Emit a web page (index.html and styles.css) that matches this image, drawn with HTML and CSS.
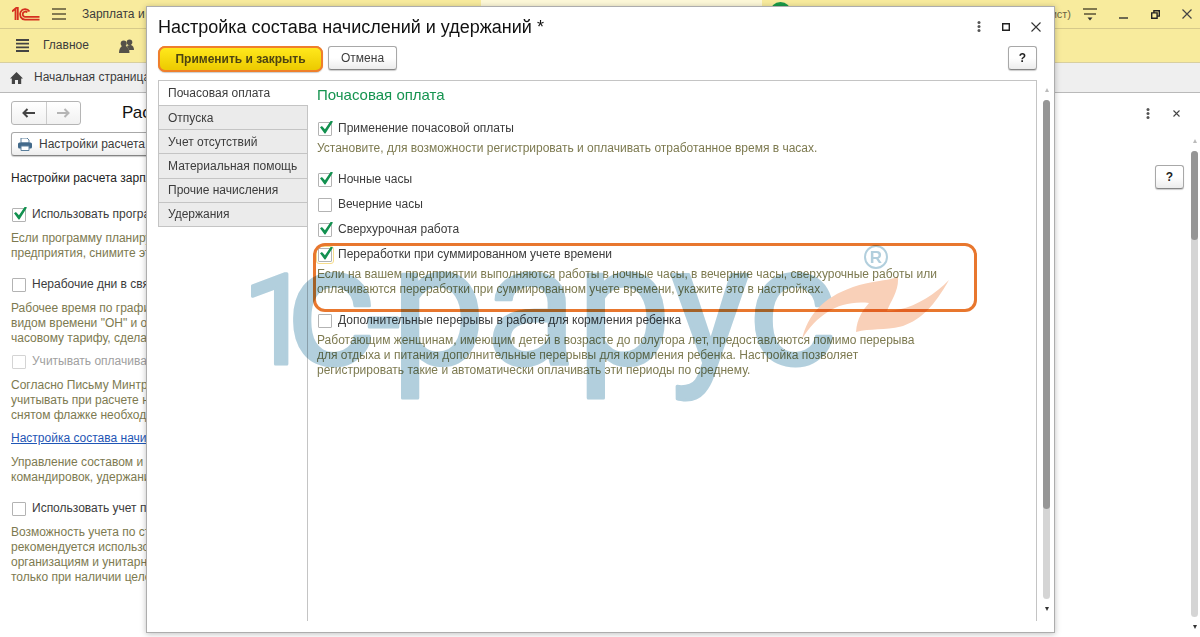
FILE: index.html
```html
<!DOCTYPE html>
<html lang="ru">
<head>
    <meta charset="UTF-8">
    <meta name="viewport" content="width=device-width, initial-scale=1.0">
    <title>Настройка состава начислений и удержаний</title>
    <link rel="stylesheet" href="styles.css">
</head>
<body>
    <div class="app">
        <header class="titlebar">
            <svg class="logo" width="28" height="14" viewBox="0 0 28 14" fill="none" stroke="#d5301f" stroke-width="1.8">
                <path d="M0 4.5 3.5 1.5V13M5.8 13V.8H3.8"/>
                <path d="M17.5 4.5A5.2 5.2 0 1 0 13 12.6H27.5"/>
                <path d="M15.3 5.3A2.7 2.7 0 1 0 13 9.9H27.5"/>
            </svg>
            <button class="icon-btn" aria-label="Меню">
                <svg width="14" height="12" viewBox="0 0 14 12" stroke="#5e5738" stroke-width="1.4"><path d="M0 1H14M0 6H14M0 11H14"/></svg>
            </button>
            <span class="app-name">Зарплата и управление</span>
            <div class="search-box"></div>
            <div class="green-dot"></div>
            <div class="window-tools">
                <span class="user-name">(Расчетчик, специалист)</span>
                <button class="icon-btn" aria-label="Сервис">
                    <svg width="14" height="13" viewBox="0 0 14 13" stroke="#5a5335" stroke-width="1.4"><path d="M0 1H14M1 6H13"/><path d="M4.5 9.5H9.5L7 12.5Z" fill="#333" stroke="none"/></svg>
                </button>
                <button class="icon-btn" aria-label="Свернуть">
                    <svg width="10" height="10" viewBox="0 0 10 10" stroke="#333" stroke-width="1.4"><path d="M0 9H9"/></svg>
                </button>
                <button class="icon-btn" aria-label="Восстановить">
                    <svg width="9" height="9" viewBox="0 0 9 9" fill="none" stroke="#222" stroke-width="1.4"><path d="M.7 2.9H6.1V8.3H.7ZM2.9 2.5V.7H8.3V6.1H6.5"/></svg>
                </button>
                <button class="icon-btn" aria-label="Закрыть">
                    <svg width="10" height="10" viewBox="0 0 10 10" stroke="#444" stroke-width="1.2"><path d="M.5.5 9.5 9.5M9.5.5.5 9.5"/></svg>
                </button>
            </div>
        </header>

        <nav class="sections">
            <svg width="13" height="13" viewBox="0 0 13 13" stroke="#444" stroke-width="1.8"><path d="M0 1H13M0 4.7H13M0 8.4H13M0 12H13"/></svg>
            <a href="#">Главное</a>
            <svg class="people" width="15" height="14" viewBox="0 0 15 14" fill="#555149">
                <circle cx="10.5" cy="3.2" r="2.8"/>
                <path d="M8 7Q10 5.600 12 6Q15 7 15 11H10Z"/>
                <circle cx="4.7" cy="4.6" r="3"/>
                <path d="M0 14Q0 9 3 7H7Q10.5 9 10.5 14Z"/>
            </svg>
        </nav>

        <div class="page-tabs">
            <svg width="13" height="12" viewBox="0 0 13 12" fill="#444"><path d="M6.5 0 13 6.4H11.2V12H8V8H5V12H1.8V6.4H0Z"/></svg>
            <a href="#">Начальная страница</a>
        </div>

        <main class="page">
            <div class="page-head">
                <div class="history">
                    <button aria-label="Назад"><svg width="13" height="10" viewBox="0 0 13 10" fill="none" stroke="#444" stroke-width="2"><path d="M13 5H2M5.5 1 1.5 5 5.5 9"/></svg></button>
                    <button aria-label="Вперед"><svg width="13" height="10" viewBox="0 0 13 10" fill="none" stroke="#b5b5b5" stroke-width="2"><path d="M0 5H11M7.5 1 11.5 5 7.5 9"/></svg></button>
                </div>
                <h1>Расчет зарплаты</h1>
                <div class="page-tools">
                    <button class="icon-btn" aria-label="Еще"><svg width="4" height="11" viewBox="0 0 4 11" fill="#555"><circle cx="2" cy="1.6" r="1.5"/><circle cx="2" cy="5.5" r="1.5"/><circle cx="2" cy="9.4" r="1.5"/></svg></button>
                    <button class="icon-btn" aria-label="Закрыть страницу"><svg width="7" height="7" viewBox="0 0 7 7" stroke="#444" stroke-width="1.1"><path d="M.5.5 6.5 6.5M6.5.5.5 6.5"/></svg></button>
                </div>
            </div>
            <button class="btn print-btn">
                <svg width="14" height="13" viewBox="0 0 14 13">
                    <path d="M3 0H9L11 2V5H3Z" fill="#fff" stroke="#5b7f9c"/>
                    <rect y="4.5" width="14" height="6" rx="1.5" fill="#42698a"/>
                    <path d="M3 8H11V12.5H3Z" fill="#fff" stroke="#5b7f9c"/>
                </svg>
                Настройки расчета
            </button>
            <button class="btn help-btn page-help">?</button>

            <div class="options">
                <p class="caption">Настройки расчета зарплаты</p>
                <label class="check"><input type="checkbox" checked>Использовать программу</label>
                <p class="hint">Если программу планируется<br>предприятия, снимите этот</p>
                <label class="check spaced"><input type="checkbox">Нерабочие дни в связи</label>
                <p class="hint">Рабочее время по графику<br>видом времени "ОН" и оплата<br>часовому тарифу, сделать</p>
                <label class="check off"><input type="checkbox" disabled>Учитывать оплачиваемые</label>
                <p class="hint">Согласно Письму Минтруда<br>учитывать при расчете нормы<br>снятом флажке необходимо</p>
                <a class="link" href="#">Настройка состава начислений</a>
                <p class="hint">Управление составом и<br>командировок, удержаний</p>
                <label class="check spaced"><input type="checkbox">Использовать учет по</label>
                <p class="hint">Возможность учета по статьям<br>рекомендуется использовать<br>организациям и унитарным<br>только при наличии целевых</p>
            </div>
            <div class="scrollbar page-scroll">
                <i class="arrow-up"></i>
                <div class="track"><div class="thumb"></div></div>
                <i class="arrow-down"></i>
            </div>
        </main>
    </div>

    <div class="dialog" role="dialog" aria-labelledby="dialog-title">
        <div class="dialog-head">
            <h2 id="dialog-title">Настройка состава начислений и удержаний *</h2>
            <button class="icon-btn" aria-label="Еще"><svg width="4" height="11" viewBox="0 0 4 11" fill="#555"><circle cx="2" cy="1.6" r="1.5"/><circle cx="2" cy="5.5" r="1.5"/><circle cx="2" cy="9.4" r="1.5"/></svg></button>
            <button class="icon-btn" aria-label="Развернуть"><svg width="8" height="8" viewBox="0 0 8 8" fill="none" stroke="#222" stroke-width="1.4"><path d="M.7.7H7.3V7.3H.7Z"/></svg></button>
            <button class="icon-btn" aria-label="Закрыть окно"><svg width="10" height="10" viewBox="0 0 10 10" stroke="#333" stroke-width="1.1"><path d="M.5.5 9.5 9.5M9.5.5.5 9.5"/></svg></button>
        </div>

        <div class="dialog-buttons">
            <button class="btn apply-btn">Применить и закрыть</button>
            <button class="btn cancel-btn">Отмена</button>
            <button class="btn help-btn">?</button>
        </div>

        <div class="dialog-body">
            <div class="tabs-column">
                <div class="tabs" role="tablist">
                    <button class="tab active" role="tab">Почасовая оплата</button>
                    <button class="tab" role="tab">Отпуска</button>
                    <button class="tab" role="tab">Учет отсутствий</button>
                    <button class="tab" role="tab">Материальная помощь</button>
                    <button class="tab" role="tab">Прочие начисления</button>
                    <button class="tab" role="tab">Удержания</button>
                </div>
            </div>

            <div class="panel">
                <h3>Почасовая оплата</h3>
                <label class="check"><input type="checkbox" checked>Применение почасовой оплаты</label>
                <p class="hint">Установите, для возможности регистрировать и оплачивать отработанное время в часах.</p>
                <div class="check-list">
                    <label class="check"><input type="checkbox" checked>Ночные часы</label>
                    <label class="check"><input type="checkbox">Вечерние часы</label>
                    <label class="check"><input type="checkbox" checked>Сверхурочная работа</label>
                </div>
                <div class="marked">
                    <label class="check"><input class="focused" type="checkbox" checked>Переработки при суммированном учете времени</label>
                    <p class="hint">Если на вашем предприятии выполняются работы в ночные часы, в вечерние часы, сверхурочные работы или<br>оплачиваются переработки при суммированном учете времени, укажите это в настройках.</p>
                </div>
                <label class="check"><input type="checkbox">Дополнительные перерывы в работе для кормления ребенка</label>
                <p class="hint">Работающим женщинам, имеющим детей в возрасте до полутора лет, предоставляются помимо перерыва<br>для отдыха и питания дополнительные перерывы для кормления ребенка. Настройка позволяет<br>регистрировать такие и автоматически оплачивать эти периоды по среднему.</p>
            </div>

            <div class="scrollbar">
                <i class="arrow-up"></i>
                <div class="track"><div class="thumb"></div></div>
                <i class="arrow-down"></i>
            </div>
        </div>

        <!-- Watermark over the form -->
        <svg class="watermark" width="710" height="170" viewBox="245 240 710 170">
            <g class="brand">
                <text class="brand-digit" x="242" y="364">1</text>
                <text x="287" y="364">с</text>
                <text class="brand-dash" x="367" y="359">-</text>
                <text x="391" y="364">рарус</text>
            </g>
            <circle cx="876" cy="257" r="11" fill="none" stroke="#b2cfdd" stroke-width="2"/>
            <text class="reg" x="876" y="263" text-anchor="middle">R</text>
            <path fill="#f9d0b8" d="M802 339C808 315 822 298 853 287C870 281 887 281 898 277C899 291 891 300 887 311C911 310 932 297 949 280C934 306 922 319 903 326C886 331 871 328 856 332C857 318 863 310 869 303C839 300 818 314 802 339Z"/>
        </svg>
    </div>
</body>
</html>
```

FILE: styles.css
```css
*, *::before, *::after {
    box-sizing: border-box;
}

body {
    margin: 0;
    font-family: "Liberation Sans", Arial, sans-serif;
    font-size: 12px;
    line-height: 15px;
    color: #3c3c3c;
    background-color: #fff;
}

h1, h2, h3, p {
    margin: 0;
    font-weight: normal;
}

button {
    font-family: inherit;
    font-size: inherit;
    color: inherit;
    cursor: pointer;
}

svg {
    display: block;
    flex: none;
}

a {
    color: inherit;
    text-decoration: none;
}

.app {
    display: flex;
    flex-direction: column;
    height: 100vh;
    overflow: hidden;
    white-space: nowrap;
}

.icon-btn {
    padding: 0;
    border: none;
    background: none;
}

/* Top bars */
.titlebar {
    position: relative;
    display: flex;
    align-items: center;
    height: 29px;
    padding: 0 8px 0 12px;
    background-color: #f8eb9d;
    border-bottom: 1px solid #d6c98a;
}

.titlebar .logo {
    margin-right: 12px;
}

.app-name {
    margin-left: 16px;
}

.search-box {
    position: absolute;
    top: 0;
    left: 481px;
    width: 281px;
    height: 7px;
    background-color: #fdf8d8;
}

.green-dot {
    position: absolute;
    top: 2px;
    left: 770px;
    width: 21px;
    height: 21px;
    border-radius: 50%;
    background-color: #1a9a48;
}

.window-tools {
    display: flex;
    align-items: center;
    gap: 22px;
    margin-left: auto;
}

.user-name {
    margin-right: -10px;
    font-size: 11px;
    color: #6b6444;
}

.sections {
    display: flex;
    align-items: center;
    height: 34px;
    padding: 0 16px;
    background-color: #f8eb9d;
    border-bottom: 1px solid #d8cf9f;
}

.sections a {
    margin: 0 30px 0 14px;
}

.page-tabs {
    display: flex;
    align-items: center;
    gap: 11px;
    height: 30px;
    padding: 0 10px;
    background-color: #efefef;
    border-bottom: 1px solid #b9b9b9;
}

/* Page under the dialog */
.page {
    position: relative;
    flex: 1;
    padding: 8px 11px;
}

.page-head {
    display: flex;
    align-items: center;
    height: 24px;
}

.page-head h1 {
    margin-left: 41px;
    font-size: 17px;
    line-height: 24px;
    color: #111;
}

.history {
    display: flex;
    width: 70px;
    height: 24px;
    border: 1px solid #b5b5b5;
    border-radius: 3px;
    background: linear-gradient(#fff, #f1f1f1);
}

.history button {
    display: flex;
    flex: 1;
    align-items: center;
    justify-content: center;
    padding: 0;
    border: none;
    background: none;
}

.history button + button {
    border-left: 1px solid #ccc;
}

.page-tools {
    display: flex;
    align-items: center;
    gap: 23px;
    margin-left: auto;
    margin-right: 9px;
}

.btn {
    height: 24px;
    padding: 0 12px;
    border: 1px solid #a8a8a8;
    border-bottom-color: #858585;
    border-radius: 3px;
    background: linear-gradient(#fff 50%, #ececec);
    box-shadow: 0 1px 1px rgba(0, 0, 0, 0.2);
}

.print-btn {
    display: flex;
    align-items: center;
    gap: 7px;
    margin-top: 7px;
    padding: 0 6px;
}

.help-btn {
    width: 29px;
    padding: 0;
    font-weight: bold;
    color: #222;
}

.page-help {
    position: absolute;
    top: 72px;
    right: 16px;
}

.options {
    display: flex;
    flex-direction: column;
    align-items: flex-start;
    margin-top: 15px;
}

.caption {
    margin-bottom: 21px;
    color: #222;
}

.check {
    display: flex;
    align-items: center;
    gap: 6px;
    height: 15px;
}

.check input {
    position: relative;
    flex: none;
    width: 14px;
    height: 14px;
    margin: 0 0 0 1px;
    appearance: none;
    border: 1px solid #b3b3b3;
    border-radius: 1px;
    background-color: #fff;
}

.check input:checked::before {
    content: "";
    position: absolute;
    top: -2px;
    left: 1px;
    width: 13px;
    height: 13px;
    background-color: #139150;
    clip-path: polygon(0 52%, 15% 42%, 38% 68%, 84% 0, 100% 7%, 42% 100%, 35% 100%);
}

.check .focused {
    outline: 1px solid #f7dd8b;
    outline-offset: 1px;
}

.check.off {
    color: #a0a0a0;
}

.check.off input {
    border-color: #d4d4d4;
}

.hint {
    color: #7d7a50;
}

.options .hint {
    margin: 9px 0 8px;
}

.options .spaced {
    margin-top: 8px;
}

.link {
    color: #1f56b5;
    text-decoration: underline;
}

/* Scrollbars */
.scrollbar {
    display: flex;
    flex-direction: column;
    align-items: center;
    width: 7px;
}

.track {
    flex: 1;
    width: 7px;
    margin: 8px 0;
    border-radius: 4px;
    background-color: #d5d5d5;
}

.thumb {
    height: 82%;
    border-radius: 4px;
    background-color: #969696;
}

.arrow-up, .arrow-down {
    border: 2px solid transparent;
}

.arrow-up {
    border-top: 0;
    border-bottom: 4px solid #bbb;
}

.arrow-down {
    border-bottom: 0;
    border-top: 4px solid #333;
}

.page-scroll {
    position: absolute;
    top: 46px;
    right: 2px;
    bottom: 8px;
}

.page-scroll .thumb {
    height: 19%;
}

/* Dialog */
.dialog {
    position: fixed;
    top: 6px;
    right: 145px;
    bottom: 4px;
    left: 146px;
    display: flex;
    flex-direction: column;
    padding: 0 4px 11px 11px;
    border: 1px solid #adadad;
    background-color: #fff;
    box-shadow: 0 1px 6px rgba(0, 0, 0, 0.25);
}

.dialog-head {
    display: flex;
    align-items: center;
    gap: 21px;
    height: 39px;
    padding-right: 9px;
}

.dialog-head h2 {
    margin-right: auto;
    font-size: 18px;
    line-height: 24px;
    color: #111;
}

.dialog-buttons {
    display: flex;
    gap: 5px;
    height: 34px;
    padding-right: 13px;
}

.apply-btn {
    width: 165px;
    height: 26px;
    border: 2px solid #ef7f2c;
    border-radius: 7px;
    outline: 1px solid #ef7f2c;
    outline-offset: -1px;
    background: linear-gradient(#ffe81c, #ecca00);
    font-weight: bold;
    color: #4d4411;
}

.dialog-buttons .help-btn {
    margin-left: auto;
}

.dialog-body {
    display: flex;
    flex: 1;
    min-height: 0;
}

.tabs-column {
    width: 150px;
    border-top: 1px solid #c4c4c4;
    border-right: 1px solid #c4c4c4;
}

.tabs {
    display: grid;
    grid-auto-rows: 1fr;
    height: 146px;
    border-left: 1px solid #c4c4c4;
    border-bottom: 1px solid #c4c4c4;
}

.tab {
    padding: 0 9px;
    border: none;
    border-top: 1px solid #c4c4c4;
    background-color: #ebebeb;
    text-align: left;
    white-space: nowrap;
}

.tab.active {
    margin-right: -1px;
    border-top: none;
    background-color: #fff;
}

.panel {
    flex: 1;
    padding: 4px 0 0 9px;
    border-top: 1px solid #c4c4c4;
    border-right: 1px solid #c4c4c4;
    white-space: nowrap;
}

.panel h3 {
    margin-bottom: 16px;
    font-size: 15px;
    line-height: 20px;
    color: #169450;
}

.panel .hint {
    margin-top: 5px;
}

.check-list {
    display: flex;
    flex-direction: column;
    gap: 10px;
    margin: 16px 0 10px;
}

.marked {
    position: relative;
    margin-bottom: 16px;
}

.marked::after {
    content: "";
    position: absolute;
    top: -4px;
    left: -4px;
    width: 664px;
    height: 69px;
    border: 3px solid #e8772e;
    border-radius: 12px;
}

.dialog-body .scrollbar {
    margin: 8px 0 10px 6px;
}

.watermark {
    position: absolute;
    top: 233px;
    left: 98px;
    overflow: visible;
    mix-blend-mode: multiply;
    pointer-events: none;
}

.brand {
    font-family: Roboto, sans-serif;
    font-size: 168px;
    fill: #b2cfdd;
    stroke: #b2cfdd;
    stroke-width: 3px;
    stroke-linejoin: round;
}

.brand-digit {
    font-size: 126px;
}

.brand-dash {
    font-size: 120px;
}

.reg {
    font-size: 17px;
    font-weight: bold;
    fill: #b2cfdd;
}
```
